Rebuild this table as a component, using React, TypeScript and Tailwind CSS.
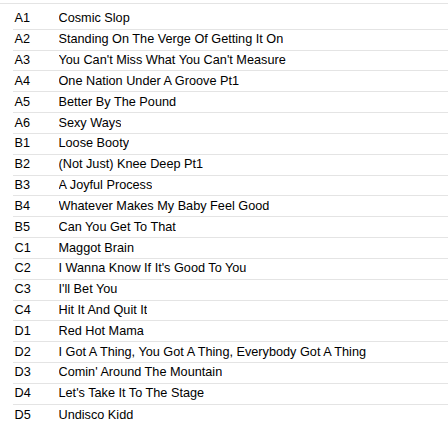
const tracks = [
  ["A1", "Cosmic Slop"],
  ["A2", "Standing On The Verge Of Getting It On"],
  ["A3", "You Can't Miss What You Can't Measure"],
  ["A4", "One Nation Under A Groove Pt1"],
  ["A5", "Better By The Pound"],
  ["A6", "Sexy Ways"],
  ["B1", "Loose Booty"],
  ["B2", "(Not Just) Knee Deep Pt1"],
  ["B3", "A Joyful Process"],
  ["B4", "Whatever Makes My Baby Feel Good"],
  ["B5", "Can You Get To That"],
  ["C1", "Maggot Brain"],
  ["C2", "I Wanna Know If It's Good To You"],
  ["C3", "I'll Bet You"],
  ["C4", "Hit It And Quit It"],
  ["D1", "Red Hot Mama"],
  ["D2", "I Got A Thing, You Got A Thing, Everybody Got A Thing"],
  ["D3", "Comin' Around The Mountain"],
  ["D4", "Let's Take It To The Stage"],
  ["D5", "Undisco Kidd"],
]

export default function App() {
  return (
    <div className="w-[448px] h-[431px] bg-white font-['Liberation_Sans',Arial,sans-serif] text-[12.7px] text-black">
      <div className="mt-[3px] border-t border-[#e4e4e4] pt-[5px]">
        <ul className="ml-[13px]">
          {tracks.map(([pos, title], i) => (
            <li
              key={pos}
              className={`flex items-center h-[20.83px] pl-[1.5px] ${i < tracks.length - 1 ? "border-b border-[#e4e4e4]" : ""}`}
            >
              <span className="w-[44px] shrink-0">{pos}</span>
              <span className="truncate">{title}</span>
            </li>
          ))}
        </ul>
      </div>
    </div>
  )
}
